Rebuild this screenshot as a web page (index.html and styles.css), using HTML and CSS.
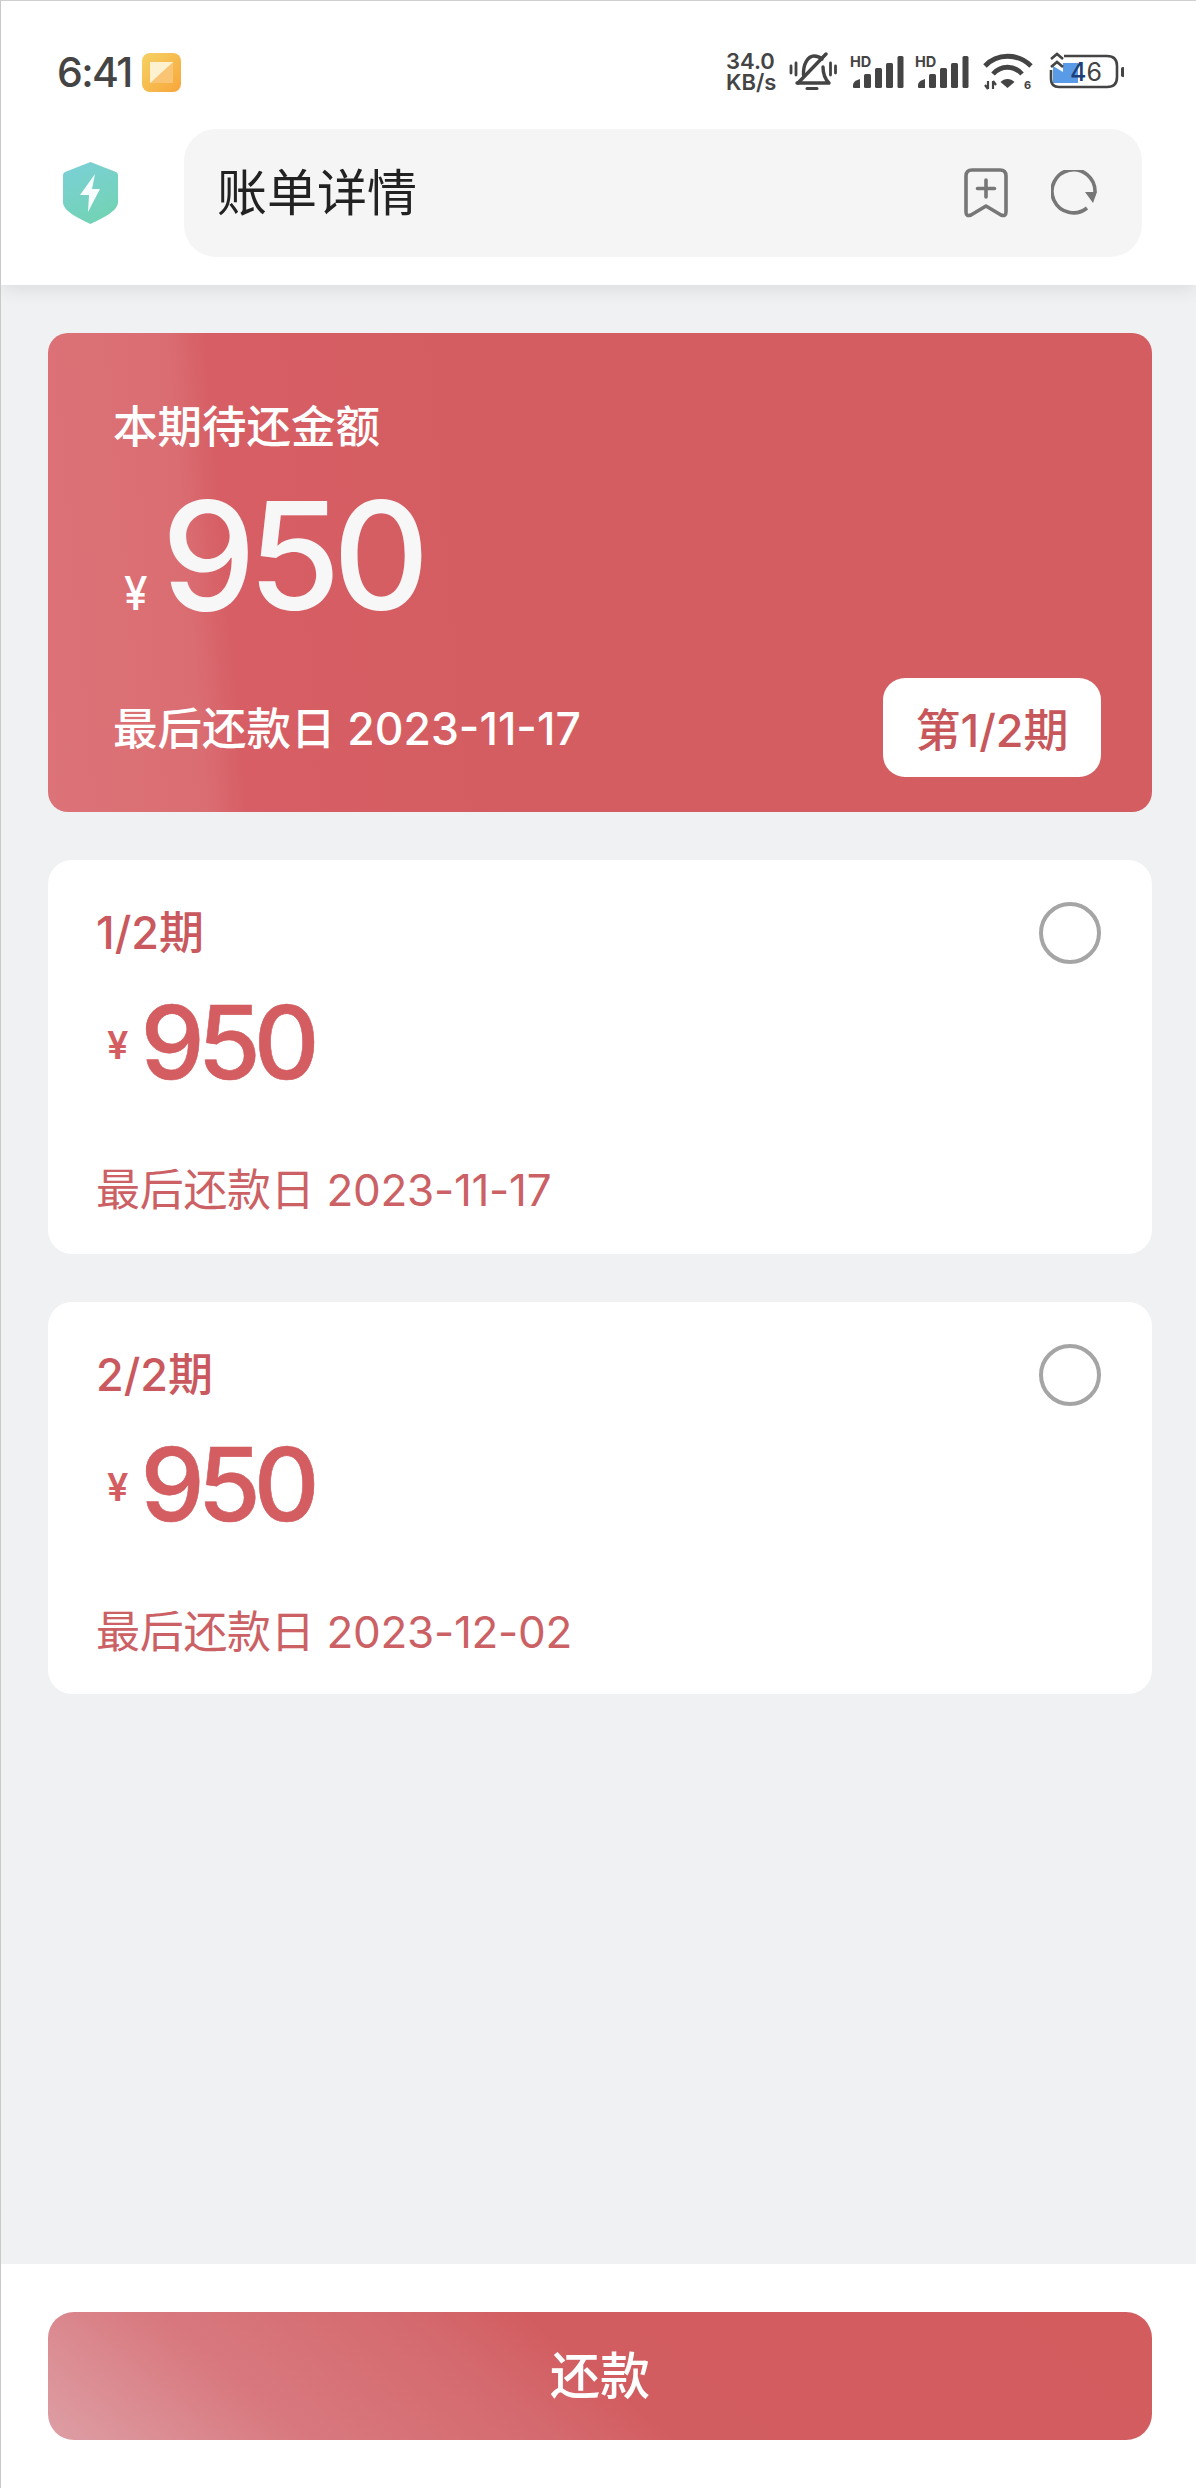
FILE: index.html
```html
<!DOCTYPE html>
<html lang="zh-CN">
<head>
<meta charset="utf-8">
<title>账单详情</title>
<link rel="stylesheet" href="styles.css">
</head>
<body>
<div class="page">
  <header class="top">
    <div class="status">
      <div class="status-left">
        <span class="time">6:41</span>
        <svg class="note" viewBox="0 0 39 39"><defs><linearGradient id="ng" x1="0" y1="0" x2="1" y2="1"><stop offset="0" stop-color="#f5d264"/><stop offset="1" stop-color="#f8a53a"/></linearGradient></defs><rect width="39" height="39" rx="8" fill="url(#ng)"/><path d="M8 9h23v21H8z" fill="#fbdf9f"/><path d="M31 9v21H8z" fill="#f9c574"/><path d="M8 30 31 9H8z" fill="#fdf1cf"/></svg>
      </div>
      <div class="status-right">
        <div class="speed"><span class="speed-line">34.0</span><span class="speed-line">KB/s</span></div>
        <svg class="bell" viewBox="0 0 48 40" fill="none" stroke="#444" stroke-width="3.400" stroke-linecap="round" stroke-linejoin="round"><path d="M2 14v7M7 11v12M41.500 11v12M46.500 14v7" stroke-width="2.800"/><path d="M37 2 9 31"/><path d="M14.500 23C14 12 19 4 25 4c3 0 6 1 8 3M34 15c0 7 2 12 6 16H8"/><path d="M18 36.500h10" stroke-width="3"/></svg>
        <svg class="signal" viewBox="0 0 55 40"><text x="1" y="15" class="hd">HD</text><path d="M4 33q0-4 7-6v9H5q-1 0-1-1z" fill="#444"/><rect x="15" y="22" width="7" height="14" rx="1.500" fill="#444"/><rect x="26" y="16" width="7" height="20" rx="1.500" fill="#444"/><rect x="37" y="11" width="7" height="25" rx="1.500" fill="#444"/><rect x="48.500" y="4" width="6" height="32" rx="1.500" fill="#444"/></svg>
        <svg class="signal" viewBox="0 0 55 40"><text x="1" y="15" class="hd">HD</text><path d="M4 33q0-4 7-6v9H5q-1 0-1-1z" fill="#444"/><rect x="15" y="22" width="7" height="14" rx="1.500" fill="#444"/><rect x="26" y="16" width="7" height="20" rx="1.500" fill="#444"/><rect x="37" y="11" width="7" height="25" rx="1.500" fill="#444"/><rect x="48.500" y="4" width="6" height="32" rx="1.500" fill="#444"/></svg>
        <svg class="wifi" viewBox="0 0 50 40" fill="none" stroke="#444" stroke-width="4.800"><path d="M2 14C14 1 35 1 48 14M10 22C18 13 31 13 39 22"/><path d="M24.500 36l-7-6c4-4 10-4 14 0z" fill="#444" stroke="none"/><path d="M5 29v8M2 33l3 4M10 37v-8M10 29l3 4" stroke-width="2.200"/><text x="41" y="37" class="six">6</text></svg>
        <div class="battery">
          <svg class="battery-art" viewBox="0 0 75 40" fill="none"><path d="M4 14l10 6v-9h15v20H4z" fill="#5a9be8"/><path d="M15 4h43q10 0 10 10v11q0 10-10 10H10q-8 0-8-8V18" stroke="#444" stroke-width="2.600"/><path d="M2 7l6-5 6 5M2 15l6-5 6 5" stroke="#444" stroke-width="2.600"/><rect x="72" y="15" width="3.500" height="10" rx="1.700" fill="#444"/></svg>
          <span class="battery-num"><b>4</b>6</span>
        </div>
      </div>
    </div>
    <div class="nav">
      <svg class="shield" viewBox="0 0 55 62"><defs><linearGradient id="sg" x1="0.200" y1="0" x2="0.600" y2="1"><stop offset="0" stop-color="#7bd0d6"/><stop offset="1" stop-color="#72d3b4"/></linearGradient></defs><path d="M27.500 0 53 10q2 1 2 3v27c0 9-15 16-27.500 22C15 56 0 49 0 40V13q0-2 2-3z" fill="url(#sg)"/><path d="M32 12 17 33h9l-1 17 12-23h-8z" fill="#fff" fill-opacity=".94"/></svg>
      <div class="address">
        <span class="address-title">账单详情</span>
        <svg class="bookmark" viewBox="0 0 44 50" fill="none" stroke="#777" stroke-width="3.600" stroke-linejoin="round" stroke-linecap="round"><path d="M8 2h28q6 0 6 6v36q0 5-5 3L22 38 7 47q-5 2-5-3V8q0-6 6-6z"/><path d="M22 12v17M13.500 20.500h17"/></svg>
        <svg class="refresh" viewBox="0 0 46 46" fill="none"><path d="M36 38A21.500 21.500 0 1 1 44 22" stroke="#777" stroke-width="3.600"/><path d="M34 22h12l-4 11z" fill="#777"/></svg>
      </div>
    </div>
  </header>

  <main class="content">
    <section class="hero">
      <div class="hero-label">本期待还金额</div>
      <div class="hero-amount"><span class="hero-yen">¥</span><span class="hero-num">950</span></div>
      <div class="hero-foot">
        <span class="hero-date">最后还款日 2023-11-17</span>
        <span class="badge">第1/2期</span>
      </div>
    </section>

    <section class="bill bill-a">
      <div class="bill-head"><span class="bill-title">1/2期</span><span class="radio"></span></div>
      <div class="bill-amount"><span class="bill-yen">¥</span><span class="bill-num">950</span></div>
      <div class="bill-date">最后还款日 2023-11-17</div>
    </section>

    <section class="bill bill-b">
      <div class="bill-head"><span class="bill-title">2/2期</span><span class="radio"></span></div>
      <div class="bill-amount"><span class="bill-yen">¥</span><span class="bill-num">950</span></div>
      <div class="bill-date">最后还款日 2023-12-02</div>
    </section>
  </main>

  <footer class="bottom">
    <button class="pay">还款</button>
  </footer>
</div>
</body>
</html>
```
FILE: styles.css
```css
* { box-sizing: border-box; }
html, body { margin: 0; padding: 0; }
body { font-family: Inter, "Noto Sans CJK SC", sans-serif; background: #f0f1f3; }
.page { width: 1196px; height: 2488px; display: flex; flex-direction: column; overflow: hidden; border-left: 1px solid #c9c9c9; border-top: 1px solid #cfcfcf; }

.top { height: 284px; background: #fff; box-shadow: 0 4px 18px rgba(0,0,0,.09); position: relative; flex: none; }
.status { height: 128px; display: flex; justify-content: space-between; align-items: center; padding: 14px 72px 0 56px; }
.status-left { display: flex; align-items: center; gap: 10px; }
.time { font-size: 41px; font-weight: 500; color: #444; line-height: 48px; letter-spacing: -1.6px; }
.note { width: 39px; height: 39px; }
.status-right { display: flex; align-items: center; }
.speed { width: 63px; display: flex; flex-direction: column; }
.speed-line { font-size: 22px; line-height: 21px; height: 21px; font-weight: 600; color: #444; }
.bell { width: 48px; height: 40px; margin-right: 12px; }
.signal { width: 55px; height: 40px; margin-right: 10px; }
.hd { font-size: 14.500px; font-weight: 700; fill: #444; font-family: Inter, sans-serif; }
.wifi { width: 50px; height: 40px; margin: 0 16px 0 4px; }
.six { font-size: 11px; font-weight: 700; fill: #444; stroke: none; font-family: Inter, sans-serif; }
.battery { width: 75px; height: 40px; position: relative; }
.battery-art { width: 75px; height: 40px; display: block; }
.battery-num { position: absolute; left: 21px; top: 5px; font-size: 25px; line-height: 30px; color: #444; font-weight: 400; }
.battery-num b { color: #1c3f78; font-weight: 500; }

.nav { display: flex; align-items: center; }
.shield { width: 55px; height: 62px; margin-left: 62px; flex: none; }
.address { width: 958px; height: 128px; margin-left: 66px; background: #f5f5f5; border-radius: 32px; display: flex; align-items: center; padding-left: 33px; }
.address-title { font-size: 50px; color: #222; line-height: 60px; font-weight: 400; flex: 1; }
.bookmark { width: 44px; height: 50px; margin-right: 43px; }
.refresh { width: 46px; height: 46px; margin-right: 45px; }

.content { flex: 1; padding: 48px 44px 0 47px; display: flex; flex-direction: column; gap: 48px; }
.hero { height: 479px; border-radius: 20px; color: #fff; padding: 64px 51px 35px 65px; display: flex; flex-direction: column;
  background: linear-gradient(85deg, #dc7378 0, #da6d72 14%, #d65e64 17.500%, #d45d62 40%, #d35d60 100%); }
.hero-label { font-size: 44.500px; line-height: 60px; font-weight: 500; }
.hero-amount { display: flex; align-items: baseline; height: 150px; margin-top: 24px; line-height: 150px; }
.hero-yen { font-size: 46px; font-weight: 500; margin: 0 13px 0 10px; transform: scaleX(.92); }
.hero-num { font-size: 150px; font-weight: 500; color: #f7f7f7; letter-spacing: -8px; }
.hero-foot { margin-top: auto; display: flex; justify-content: space-between; align-items: center; }
.hero-date { font-size: 44.500px; line-height: 60px; font-weight: 500; position: relative; top: 1px; }
.badge { width: 218px; height: 99px; background: #fff; border-radius: 22px; color: #c8575c; font-size: 45px; font-weight: 500; display: flex; align-items: center; justify-content: center; }

.bill { background: #fff; border-radius: 24px; padding: 42px 51px 0 48px; color: #cc6165; }
.bill-a { height: 394px; }
.bill-b { height: 392px; }
.bill-head { display: flex; justify-content: space-between; align-items: flex-start; }
.bill-title { font-size: 45px; line-height: 60px; font-weight: 500; color: #c9595e; margin-top: 1px; }
.radio { width: 62px; height: 62px; border: 4px solid #a5a5a5; border-radius: 50%; }
.bill-amount { display: flex; align-items: baseline; height: 110px; line-height: 110px; margin-top: 23px; }
.bill-yen { font-size: 38px; font-weight: 600; margin: 0 12px 0 11px; position: relative; top: -20px; color: #d35d60; }
.bill-num { font-size: 102px; font-weight: 500; color: #d35d60; letter-spacing: -7px; -webkit-text-stroke: .6px #d35d60; }
.bill-date { font-size: 44px; line-height: 60px; margin-top: 63px; letter-spacing: -.3px; }

.bottom { height: 224px; background: #fff; padding: 48px 44px 0 47px; flex: none; }
.pay { width: 100%; height: 128px; border: 0; border-radius: 26px; color: #fff; font: 500 50px "Noto Sans CJK SC", sans-serif; padding: 0 0 8px;
  background: linear-gradient(40deg, #dd9fa5 0, #d8797f 20%, #d46a6f 40%, #d25d60 50%, #d35c5f 100%); }
```
